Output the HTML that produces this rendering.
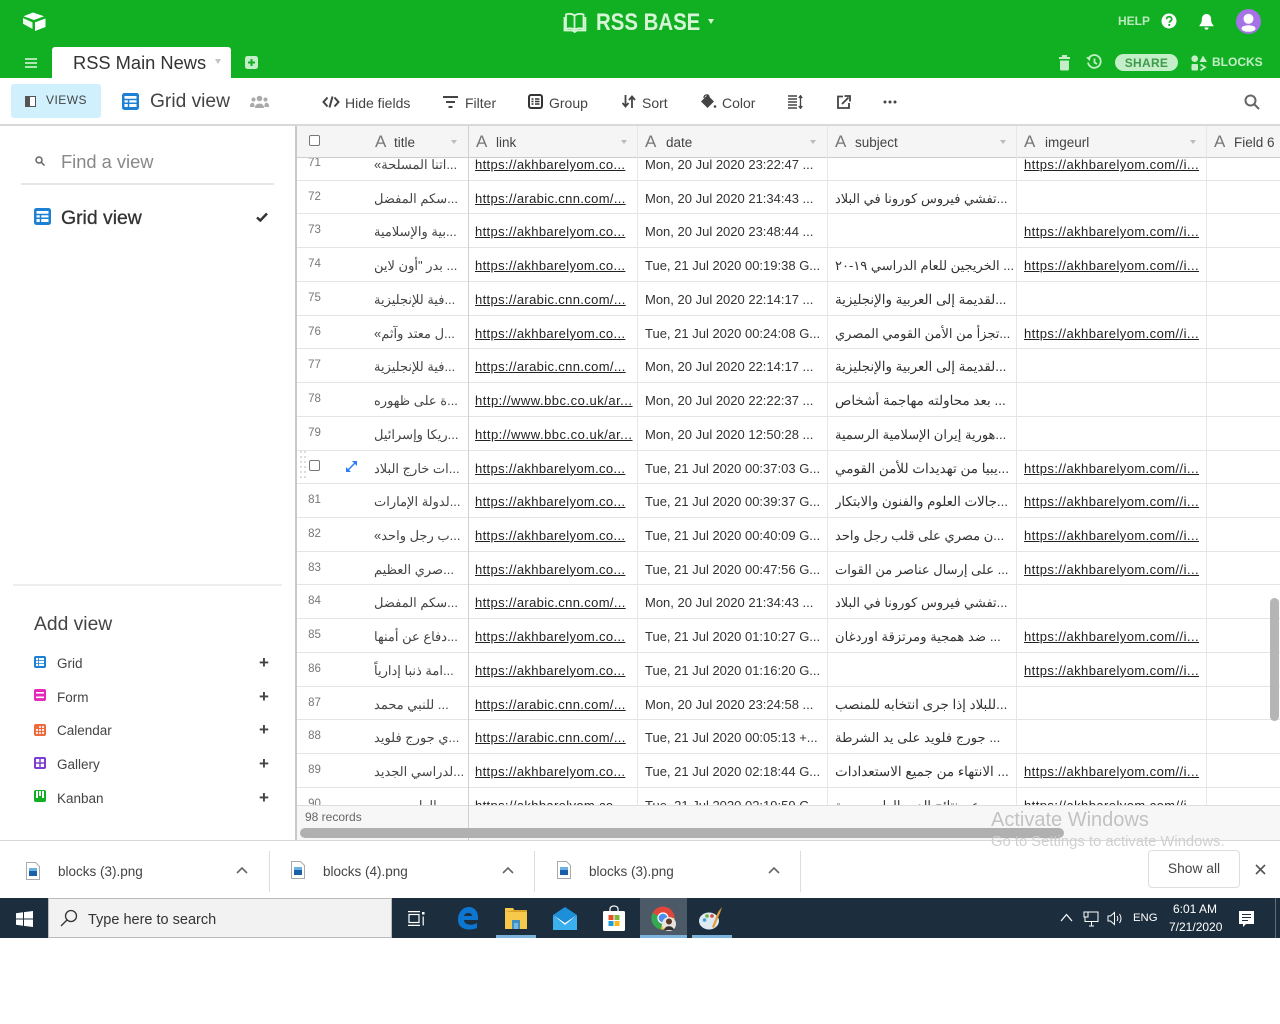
<!DOCTYPE html>
<html><head><meta charset="utf-8"><title>RSS BASE</title>
<style>
html,body{margin:0;padding:0;background:#fff}
body{position:relative;width:1280px;height:1024px;overflow:hidden;font-family:"Liberation Sans","Noto Sans CJK SC",sans-serif;color:#333}
.a{position:absolute;white-space:nowrap}
svg{position:absolute;display:block}
#grid{position:absolute;left:297px;top:158px;width:983px;height:647px;overflow:hidden}
.r{position:absolute;left:0;width:983px;height:33.72px;border-bottom:1px solid #e4e4e4;box-sizing:border-box;font-size:13px;line-height:35px}
.r span{position:absolute;top:0;white-space:nowrap;overflow:hidden}
.r span.n{left:0;width:35px;text-align:center;font-size:11.5px;color:#777;line-height:33px;top:0}
.t{left:77px;width:90px;color:#444;font-size:13px}
.l{left:178px;width:160px;color:#222;text-decoration:underline;letter-spacing:.35px}
.d{left:348px;width:180px;color:#333}
.s{left:538px;width:180px;color:#333}
.i{left:727px;width:180px;color:#222;text-decoration:underline;letter-spacing:.43px}
.v{position:absolute;top:126px;height:680px;width:1px;background:#ddd}
.h{position:absolute;top:134px;font-size:13.5px;color:#444;line-height:17px}
.ha{position:absolute;top:132px;font-size:17px;color:#777;line-height:20px}
.car{position:absolute;top:140px;width:0;height:0;border-left:3.5px solid transparent;border-right:3.5px solid transparent;border-top:4.5px solid #bbb}
.tb{position:absolute;top:94px;font-size:14px;color:#444;line-height:18px}
.av{position:absolute;left:57px;font-size:13.5px;color:#444;line-height:16px}
.pl{position:absolute;left:259px;font-size:17px;font-weight:bold;color:#444;line-height:16px}
.ic{position:absolute;left:34px;width:12px;height:12px;border-radius:2px}
.dl{position:absolute;top:863px;font-size:13.5px;color:#444;line-height:17px}
</style></head><body>

<!-- green header -->
<div class="a" style="left:0;top:0;width:1280px;height:78px;background:#11af22"></div>
<svg style="left:22px;top:12px" width="25" height="19" viewBox="0 0 25 19"><path d="M11 .5 1.5 4.2 12 8l10-3.8z" fill="#fff"/><path d="M23.5 6.500 13 10.400V19l10.500-4z" fill="#fff"/><path d="M1 6l9.500 4.400V17L1 11.800z" fill="#fff" opacity=".92"/></svg>
<svg style="left:563px;top:12px" width="24" height="21" viewBox="0 0 24 21" fill="none" stroke="#d6f5d6" stroke-width="1.800"><path d="M3 2.500c3-1 6-1 8.500 1v14c-2.500-1.500-5.500-1.500-8.500-.5zM20.500 2.500c-3-1-6-1-9 1v14c3-1.500 6-1.500 9-.5z"/><path d="M1.500 5v13.500h8l2.200 1.500 2.200-1.500h8.500V5"/></svg>
<div class="a" style="left:596px;top:9px;font-size:24px;line-height:28px;font-weight:bold;color:#d6f5d6;transform:scaleX(.85);transform-origin:0 0">RSS BASE</div>
<div class="a" style="left:708px;top:19px;width:0;height:0;border-left:3.5px solid transparent;border-right:3.500px solid transparent;border-top:5px solid #d6f5d6"></div>
<div class="a" style="left:1118px;top:14px;font-size:12px;font-weight:bold;letter-spacing:0;line-height:15px;color:#b9e9bd">HELP</div>
<svg style="left:1161px;top:13px" width="16" height="16" viewBox="0 0 16 16"><circle cx="8" cy="8" r="7.500" fill="#fff"/><path d="M5.500 6.200c0-3.300 5.200-3.300 5.200-.1 0 1.900-2.300 1.900-2.300 3.600" fill="none" stroke="#11af22" stroke-width="1.800"/><circle cx="8.300" cy="12" r="1.100" fill="#11af22"/></svg>
<svg style="left:1199px;top:14px" width="15" height="16" viewBox="0 0 15 16"><path d="M7.500 0C4 0 2.800 3 2.800 5.500c0 3-1 4.300-2.300 5.800v1h13.900v-1c-1.300-1.500-2.300-2.800-2.300-5.800C12.200 3 11 0 7.500 0z" fill="#fff"/><path d="M5.500 13.500h4c0 1.500-1 2.200-2 2.200s-2-.7-2-2.200z" fill="#fff"/></svg>
<svg style="left:1236px;top:9px" width="25" height="25" viewBox="0 0 25 25"><circle cx="12.500" cy="12.500" r="12.500" fill="#a672e8"/><circle cx="12.500" cy="9.800" r="5" fill="#fff"/><ellipse cx="12.500" cy="19.500" rx="7" ry="3.300" fill="#fff"/></svg>

<svg style="left:25px;top:58px" width="12" height="10" viewBox="0 0 12 10"><path d="M0 1h12M0 5h12M0 9h12" stroke="#c4eec8" stroke-width="1.800"/></svg>
<div class="a" style="left:52px;top:47px;width:179px;height:31px;background:#fff;border-radius:3px 3px 0 0"></div>
<div class="a" style="left:73px;top:51px;font-size:18.3px;line-height:24px;color:#333">RSS Main News</div>
<div class="a" style="left:215px;top:59px;width:0;height:0;border-left:3.500px solid transparent;border-right:3.500px solid transparent;border-top:5px solid #c4c4c4"></div>
<svg style="left:245px;top:56px" width="13" height="13" viewBox="0 0 13 13"><rect width="13" height="13" rx="2.500" fill="#c4eec8"/><path d="M6.500 3v7M3 6.500h7" stroke="#11af22" stroke-width="2"/></svg>

<svg style="left:1059px;top:55px" width="11" height="16" viewBox="0 0 11 16"><rect x="3" y="0" width="5" height="2" fill="#c4eec8"/><rect x="0" y="2" width="11" height="2" fill="#c4eec8"/><path d="M1 5.500h9V14a1.500 1.500 0 0 1-1.500 1.500h-6A1.500 1.500 0 0 1 1 14z" fill="#c4eec8"/></svg>
<svg style="left:1086px;top:54px" width="16" height="16" viewBox="0 0 16 16" fill="none" stroke="#c4eec8" stroke-width="1.800"><path d="M2.600 4.500A6.400 6.400 0 1 1 2 8.500"/><path d="M8.500 4.500V8.500l2.500 1.500"/><path d="M0 3.500 3.800 7l1-4.500z" fill="#c4eec8" stroke="none"/></svg>
<div class="a" style="left:1115px;top:54px;width:63px;height:17px;border-radius:9px;background:#c4eec8;text-align:center;font-size:12px;font-weight:bold;letter-spacing:.3px;line-height:18px;color:#3f9a4b">SHARE</div>
<svg style="left:1191px;top:55px" width="16" height="16" viewBox="0 0 16 16"><circle cx="3.700" cy="3.700" r="3.300" fill="#c4eec8"/><path d="M12 .5 16 7H8.500z" fill="#c4eec8"/><rect x=".5" y="9" width="6.500" height="6.500" rx="1" fill="#c4eec8"/><path d="M9.500 9.500 14 12.300l-4.500 3" fill="none" stroke="#c4eec8" stroke-width="1.800"/></svg>
<div class="a" style="left:1212px;top:55px;font-size:12px;font-weight:bold;letter-spacing:0;line-height:15px;color:#c4eec8">BLOCKS</div>

<!-- toolbar -->
<div class="a" style="left:11px;top:84px;width:90px;height:34px;background:#d0f0fd;border-radius:3px"></div>
<svg style="left:25px;top:96px" width="11" height="11" viewBox="0 0 11 11"><rect x=".5" y=".5" width="10" height="10" fill="#fff" stroke="#555"/><rect x=".5" y=".5" width="4.500" height="10" fill="#555"/></svg>
<div class="a" style="left:46px;top:93px;font-size:12px;letter-spacing:.45px;line-height:15px;color:#444">VIEWS</div>
<svg style="left:122px;top:93px" width="17" height="17" viewBox="0 0 17 17"><rect width="17" height="17" rx="2.500" fill="#1c80d4"/><path d="M2.500 3h12v11h-12z" fill="#fff"/><path d="M2 6.500h13M2 10.300h13M6.500 6.500v8" stroke="#1c80d4" stroke-width="1.500"/></svg>
<div class="a" style="left:150px;top:90px;font-size:19.2px;line-height:24px;color:#444">Grid view</div>
<svg style="left:250px;top:95px" width="19" height="14" viewBox="0 0 19 14" fill="#aaa"><circle cx="9.500" cy="3.500" r="2.800"/><circle cx="3.500" cy="4.500" r="2"/><circle cx="15.500" cy="4.500" r="2"/><path d="M5 13c0-6 9-6 9 0zM0 11c0-4 4.500-4.500 4.500-.5V12H0zM19 11c0-4-4.500-4.500-4.500-.5V12H19z"/></svg>

<svg style="left:322px;top:96px" width="18" height="12" viewBox="0 0 18 12" fill="none" stroke="#444" stroke-width="2"><path d="M5.500 1.500 1.500 6l4 4.500M12.500 1.500l4 4.500-4 4.500M10.500.5 7.500 11.500"/></svg>
<div class="tb" style="left:345px">Hide fields</div>
<svg style="left:443px;top:96px" width="15" height="12" viewBox="0 0 15 12"><path d="M0 1h15M3 6h9M5.500 11h4" stroke="#444" stroke-width="2"/></svg>
<div class="tb" style="left:465px">Filter</div>
<svg style="left:528px;top:94px" width="15" height="15" viewBox="0 0 15 15" fill="none" stroke="#333"><rect x="1" y="1" width="13" height="13" rx="2" stroke-width="2"/><path d="M3.500 5h2M3.500 7.500h2M3.500 10h2M7 5h4.500M7 7.500h4.500M7 10h4.500" stroke-width="1.500"/></svg>
<div class="tb" style="left:549px">Group</div>
<svg style="left:622px;top:95px" width="14" height="13" viewBox="0 0 14 13" fill="none" stroke="#444" stroke-width="1.800"><path d="M3.500 0v11M.5 8l3 3.500L6.500 8M10 13V2M7 5l3-3.500L13 5"/></svg>
<div class="tb" style="left:642px">Sort</div>
<svg style="left:700px;top:94px" width="17" height="15" viewBox="0 0 17 15"><path d="M7.500 1 14 7.500 7.500 14 1 7.500z" fill="#444"/><path d="M4 4C4 0 9 0 9 3" fill="none" stroke="#444" stroke-width="1.300"/><circle cx="15" cy="12.500" r="1.300" fill="#444"/></svg>
<div class="tb" style="left:722px">Color</div>
<svg style="left:788px;top:95px" width="15" height="14" viewBox="0 0 15 14" fill="none" stroke="#444"><path d="M0 1h9M0 4h9M0 7h9M0 10h9M0 13h9" stroke-width="1.400"/><path d="M12.500 1v12M10.800 3l1.700-2.300L14.200 3M10.800 11l1.700 2.300 1.700-2.300" stroke-width="1.300"/></svg>
<svg style="left:837px;top:95px" width="14" height="14" viewBox="0 0 14 14" fill="none" stroke="#444" stroke-width="1.800"><path d="M6 1.500H1v11.500h11V8"/><path d="M5 9l6.500-6.500M7.500 1h5.500v5.500" /></svg>
<svg style="left:883px;top:100px" width="14" height="4" viewBox="0 0 14 4" fill="#444"><circle cx="2" cy="2" r="1.500"/><circle cx="7" cy="2" r="1.500"/><circle cx="12" cy="2" r="1.500"/></svg>
<svg style="left:1244px;top:94px" width="16" height="16" viewBox="0 0 16 16" fill="none" stroke="#666" stroke-width="2"><circle cx="6.500" cy="6.500" r="5"/><path d="M10 10l5 5"/></svg>
<div class="a" style="left:0;top:124px;width:1280px;height:2px;background:#d9d9d9"></div>

<!-- sidebar -->
<svg style="left:35px;top:156px" width="10" height="10" viewBox="0 0 10 10" fill="none" stroke="#666" stroke-width="1.500"><circle cx="4" cy="4" r="3"/><path d="M6.300 6.300 9.500 9.500"/></svg>
<div class="a" style="left:61px;top:150px;font-size:18.300px;line-height:24px;color:#888">Find a view</div>
<div class="a" style="left:21px;top:183px;width:253px;height:2px;background:#e6e6e6"></div>
<svg style="left:34px;top:208px" width="17" height="17" viewBox="0 0 17 17"><rect width="17" height="17" rx="2.500" fill="#1c80d4"/><path d="M2.500 3h12v11h-12z" fill="#fff"/><path d="M2 6.500h13M2 10.300h13M6.500 6.500v8" stroke="#1c80d4" stroke-width="1.500"/></svg>
<div class="a" style="left:61px;top:206px;font-size:19.400px;line-height:24px;color:#333;-webkit-text-stroke:.3px #333">Grid view</div>
<svg style="left:256px;top:212px" width="12" height="10" viewBox="0 0 12 10"><path d="M1 5.500 4.300 8.500 11 1.500" fill="none" stroke="#333" stroke-width="2.500"/></svg>
<div class="a" style="left:13px;top:584px;width:269px;height:2px;background:#eee"></div>
<div class="a" style="left:34px;top:613px;font-size:19.300px;line-height:24px;color:#444">Add view</div>

<div class="ic" style="top:656px;background:#1c80d4"></div>
<svg style="left:36px;top:658px" width="8" height="8" viewBox="0 0 8 8"><path d="M0 0h2.200v2.200H0zM3 0h5v2.200H3zM0 3h2.200v2H0zM3 3h5v2H3zM0 5.800h2.200V8H0zM3 5.800h5V8H3z" fill="#fff"/></svg>
<div class="av" style="top:656px">Grid</div><div class="pl" style="top:655px">+</div>
<div class="ic" style="top:689px;background:#e529b8"></div>
<svg style="left:36px;top:692px" width="8" height="7" viewBox="0 0 8 7"><path d="M0 .8h8M0 5.300h8" stroke="#fff" stroke-width="1.600"/></svg>
<div class="av" style="top:690px">Form</div><div class="pl" style="top:689px">+</div>
<div class="ic" style="top:724px;background:#f0683c"></div>
<svg style="left:36px;top:726px" width="8" height="8" viewBox="0 0 8 8" fill="#fff" opacity=".85"><path d="M3 0h2v2H3zM6 0h2v2H6zM0 3h2v2H0zM3 3h2v2H3zM6 3h2v2H6zM0 6h2v2H0zM3 6h2v2H3zM6 6h2v2H6z"/></svg>
<div class="av" style="top:723px">Calendar</div><div class="pl" style="top:722px">+</div>
<div class="ic" style="top:757px;background:#7c3bd1"></div>
<svg style="left:36px;top:759px" width="8" height="8" viewBox="0 0 8 8" fill="#fff"><path d="M0 0h3.300v3.300H0zM4.700 0H8v3.300H4.700zM0 4.700h3.300V8H0zM4.700 4.700H8V8H4.700z"/></svg>
<div class="av" style="top:757px">Gallery</div><div class="pl" style="top:756px">+</div>
<div class="ic" style="top:790px;background:#11af22"></div>
<svg style="left:36px;top:791px" width="8" height="8" viewBox="0 0 8 8" fill="#fff"><path d="M0 0h2v7H0zM3 0h2v5H3zM6 0h2v7H6z"/></svg>
<div class="av" style="top:791px">Kanban</div><div class="pl" style="top:790px">+</div>

<div class="a" style="left:295px;top:126px;width:2px;height:714px;background:#c8c8c8"></div>

<!-- grid header -->
<div class="a" style="left:297px;top:126px;width:983px;height:31px;background:#f5f5f5"></div>
<div class="a" style="left:297px;top:157px;width:983px;height:1px;background:#ccc"></div>
<div class="a" style="left:309px;top:135px;width:9px;height:9px;border:1px solid #777;border-radius:2px;background:#fff"></div>
<div class="ha" style="left:375px">A</div><div class="h" style="left:394px">title</div><div class="car" style="left:451px"></div>
<div class="ha" style="left:476px">A</div><div class="h" style="left:496px">link</div><div class="car" style="left:621px"></div>
<div class="ha" style="left:645px">A</div><div class="h" style="left:666px">date</div><div class="car" style="left:810px"></div>
<div class="ha" style="left:835px">A</div><div class="h" style="left:855px">subject</div><div class="car" style="left:1000px"></div>
<div class="ha" style="left:1024px">A</div><div class="h" style="left:1045px">imgeurl</div><div class="car" style="left:1190px"></div>
<div class="ha" style="left:1214px">A</div><div class="h" style="left:1234px">Field 6</div>

<div id="grid">
<div class="r" style="top:-11px"><span class="n">71</span><span class="t">اتنا المسلحة»&rlm;...</span><span class="l">https://akhbarelyom.co...</span><span class="d">Mon, 20 Jul 2020 23:22:47 ...</span><span class="i">https://akhbarelyom.com//i...</span></div>
<div class="r" style="top:22.7px"><span class="n">72</span><span class="t">سكم المفضل...</span><span class="l">https://arabic.cnn.com/...</span><span class="d">Mon, 20 Jul 2020 21:34:43 ...</span><span class="s">تفشي فيروس كورونا في البلاد...</span></div>
<div class="r" style="top:56.4px"><span class="n">73</span><span class="t">بية والإسلامية...</span><span class="l">https://akhbarelyom.co...</span><span class="d">Mon, 20 Jul 2020 23:48:44 ...</span><span class="i">https://akhbarelyom.com//i...</span></div>
<div class="r" style="top:90.2px"><span class="n">74</span><span class="t">بدر "أون لاين ...</span><span class="l">https://akhbarelyom.co...</span><span class="d">Tue, 21 Jul 2020 00:19:38 G...</span><span class="s">الخريجين للعام الدراسي ١٩-٢٠ ...</span><span class="i">https://akhbarelyom.com//i...</span></div>
<div class="r" style="top:123.9px"><span class="n">75</span><span class="t">فية للإنجليزية...</span><span class="l">https://arabic.cnn.com/...</span><span class="d">Mon, 20 Jul 2020 22:14:17 ...</span><span class="s" style="font-size:13.4px">لقديمة إلى العربية والإنجليزية...</span></div>
<div class="r" style="top:157.6px"><span class="n">76</span><span class="t">ل معتد وآثم»&rlm;...</span><span class="l">https://akhbarelyom.co...</span><span class="d">Tue, 21 Jul 2020 00:24:08 G...</span><span class="s">تجزأ من الأمن القومي المصري...</span><span class="i">https://akhbarelyom.com//i...</span></div>
<div class="r" style="top:191.3px"><span class="n">77</span><span class="t">فية للإنجليزية...</span><span class="l">https://arabic.cnn.com/...</span><span class="d">Mon, 20 Jul 2020 22:14:17 ...</span><span class="s" style="font-size:13.4px">لقديمة إلى العربية والإنجليزية...</span></div>
<div class="r" style="top:225px"><span class="n">78</span><span class="t">ة على ظهوره...</span><span class="l" style="letter-spacing:.5px">http://www.bbc.co.uk/ar...</span><span class="d">Mon, 20 Jul 2020 22:22:37 ...</span><span class="s" style="font-size:13.5px">بعد محاولته مهاجمة أشخاص ...</span></div>
<div class="r" style="top:258.8px"><span class="n">79</span><span class="t">ريكا وإسرائيل...</span><span class="l" style="letter-spacing:.5px">http://www.bbc.co.uk/ar...</span><span class="d">Mon, 20 Jul 2020 12:50:28 ...</span><span class="s">هورية إيران الإسلامية الرسمية...</span></div>
<div class="r" style="top:292.5px"><span class="t">ات خارج البلاد...</span><span class="l">https://akhbarelyom.co...</span><span class="d">Tue, 21 Jul 2020 00:37:03 G...</span><span class="s" style="font-size:13.5px">يبيا من تهديدات للأمن القومي...</span><span class="i">https://akhbarelyom.com//i...</span></div>
<div class="r" style="top:326.2px"><span class="n">81</span><span class="t">لدولة الإمارات...</span><span class="l">https://akhbarelyom.co...</span><span class="d">Tue, 21 Jul 2020 00:39:37 G...</span><span class="s" style="font-size:13.3px">جالات العلوم والفنون والابتكار...</span><span class="i">https://akhbarelyom.com//i...</span></div>
<div class="r" style="top:359.9px"><span class="n">82</span><span class="t">ب رجل واحد»&rlm;...</span><span class="l">https://akhbarelyom.co...</span><span class="d">Tue, 21 Jul 2020 00:40:09 G...</span><span class="s">ن مصري على قلب رجل واحد...</span><span class="i">https://akhbarelyom.com//i...</span></div>
<div class="r" style="top:393.6px"><span class="n">83</span><span class="t">صري العظيم...</span><span class="l">https://akhbarelyom.co...</span><span class="d">Tue, 21 Jul 2020 00:47:56 G...</span><span class="s">على إرسال عناصر من القوات ...</span><span class="i">https://akhbarelyom.com//i...</span></div>
<div class="r" style="top:427.4px"><span class="n">84</span><span class="t">سكم المفضل...</span><span class="l">https://arabic.cnn.com/...</span><span class="d">Mon, 20 Jul 2020 21:34:43 ...</span><span class="s">تفشي فيروس كورونا في البلاد...</span></div>
<div class="r" style="top:461.1px"><span class="n">85</span><span class="t">دفاع عن أمنها...</span><span class="l">https://akhbarelyom.co...</span><span class="d">Tue, 21 Jul 2020 01:10:27 G...</span><span class="s" style="font-size:13.2px">ضد همجية ومرتزقة اوردغان ...</span><span class="i">https://akhbarelyom.com//i...</span></div>
<div class="r" style="top:494.8px"><span class="n">86</span><span class="t">امة ذنبا إدارياً...</span><span class="l">https://akhbarelyom.co...</span><span class="d">Tue, 21 Jul 2020 01:16:20 G...</span><span class="i">https://akhbarelyom.com//i...</span></div>
<div class="r" style="top:528.5px"><span class="n">87</span><span class="t">للنبي محمد ...</span><span class="l">https://arabic.cnn.com/...</span><span class="d">Mon, 20 Jul 2020 23:24:58 ...</span><span class="s" style="font-size:13.4px">للبلاد إذا جرى انتخابه للمنصب...</span></div>
<div class="r" style="top:562.2px"><span class="n">88</span><span class="t">ي جورج فلويد...</span><span class="l">https://arabic.cnn.com/...</span><span class="d">Tue, 21 Jul 2020 00:05:13 +...</span><span class="s" style="font-size:13.2px">جورج فلويد على يد الشرطة ...</span></div>
<div class="r" style="top:596px"><span class="n">89</span><span class="t">لدراسي الجديد...</span><span class="l">https://akhbarelyom.co...</span><span class="d">Tue, 21 Jul 2020 02:18:44 G...</span><span class="s" style="font-size:13.5px">الانتهاء من جميع الاستعدادات ...</span><span class="i">https://akhbarelyom.com//i...</span></div>
<div class="r" style="top:629.7px"><span class="n">90</span><span class="t">العام موسم...</span><span class="l">https://akhbarelyom.co...</span><span class="d">Tue, 21 Jul 2020 02:19:59 G...</span><span class="s">عن نتائج الدور العام مصرية...</span><span class="i">https://akhbarelyom.com//i...</span></div>
</div>

<!-- column lines -->
<div class="v" style="left:468px;background:#d0d0d0;height:714px"></div>
<div class="v" style="left:637px;background:#e6e6e6"></div>
<div class="v" style="left:827px;background:#e6e6e6"></div>
<div class="v" style="left:1016px;background:#e6e6e6"></div>
<div class="v" style="left:1206px;background:#e6e6e6"></div>

<!-- row 80 hover -->
<div class="a" style="left:309px;top:460px;width:9px;height:9px;border:1px solid #777;border-radius:2px;background:#fff"></div>
<svg style="left:300px;top:451px" width="6" height="30" viewBox="0 0 6 30" fill="#ddd"><path d="M0 0h2v2H0zM4 0h2v2H4zM0 5h2v2H0zM4 5h2v2H4zM0 10h2v2H0zM4 10h2v2H4zM0 15h2v2H0zM4 15h2v2H4zM0 20h2v2H0zM4 20h2v2H4zM0 25h2v2H0zM4 25h2v2H4z"/></svg>
<svg style="left:346px;top:461px" width="11" height="11" viewBox="0 0 11 11"><path d="M2 9 9 2" stroke="#2d7ff9" stroke-width="1.500"/><path d="M6 0h5v5zM0 6v5h5z" fill="#2d7ff9"/></svg>

<!-- footer of grid -->
<div class="a" style="left:297px;top:805px;width:983px;height:35px;background:#f7f7f7;border-top:1px solid #ddd;box-sizing:border-box"></div>
<div class="a" style="left:468px;top:805px;width:1px;height:35px;background:#d0d0d0"></div>
<div class="a" style="left:305px;top:810px;font-size:12px;line-height:14px;color:#666">98 records</div>
<div class="a" style="left:300px;top:828px;width:764px;height:10px;border-radius:5px;background:#b0b0b0"></div>
<div class="a" style="left:1270px;top:598px;width:9px;height:123px;border-radius:5px;background:#b5b5b5"></div>
<div class="a" style="left:0;top:840px;width:1280px;height:1px;background:#d8d8d8"></div>

<!-- watermark -->
<div class="a" style="left:991px;top:807px;font-size:20px;line-height:26px;color:#c2c2c2">Activate Windows</div>
<div class="a" style="left:991px;top:833px;font-size:14.800px;line-height:18px;color:#cfcfcf">Go to Settings to activate Windows.</div>

<!-- download bar -->
<svg style="left:26px;top:862px" width="14" height="18" viewBox="0 0 14 18"><path d="M.5.500h9l4 4v13H.5z" fill="#fff" stroke="#aaa"/><rect x="3" y="6" width="8" height="8" fill="#1a5fa8"/><rect x="3" y="6" width="8" height="3" fill="#6ab0e0"/></svg>
<div class="dl" style="left:58px">blocks (3).png</div>
<svg style="left:236px;top:866px" width="12" height="8" viewBox="0 0 12 8"><path d="M1 7 6 2l5 5" fill="none" stroke="#666" stroke-width="1.600"/></svg>
<div class="a" style="left:269px;top:851px;width:1px;height:41px;background:#ddd"></div>
<svg style="left:291px;top:861px" width="14" height="18" viewBox="0 0 14 18"><path d="M.5.500h9l4 4v13H.5z" fill="#fff" stroke="#aaa"/><rect x="3" y="6" width="8" height="8" fill="#1a5fa8"/><rect x="3" y="6" width="8" height="3" fill="#6ab0e0"/></svg>
<div class="dl" style="left:323px">blocks (4).png</div>
<svg style="left:502px;top:866px" width="12" height="8" viewBox="0 0 12 8"><path d="M1 7 6 2l5 5" fill="none" stroke="#666" stroke-width="1.600"/></svg>
<div class="a" style="left:534px;top:851px;width:1px;height:41px;background:#ddd"></div>
<svg style="left:557px;top:861px" width="14" height="18" viewBox="0 0 14 18"><path d="M.5.500h9l4 4v13H.5z" fill="#fff" stroke="#aaa"/><rect x="3" y="6" width="8" height="8" fill="#1a5fa8"/><rect x="3" y="6" width="8" height="3" fill="#6ab0e0"/></svg>
<div class="dl" style="left:589px">blocks (3).png</div>
<svg style="left:768px;top:866px" width="12" height="8" viewBox="0 0 12 8"><path d="M1 7 6 2l5 5" fill="none" stroke="#666" stroke-width="1.600"/></svg>
<div class="a" style="left:800px;top:851px;width:1px;height:41px;background:#ddd"></div>
<div class="a" style="left:1148px;top:850px;width:90px;height:36px;border:1px solid #ddd;border-radius:4px;text-align:center;font-size:13.800px;line-height:35px;color:#444">Show all</div>
<svg style="left:1255px;top:864px" width="11" height="11" viewBox="0 0 11 11"><path d="M1 1l9 9M10 1l-9 9" stroke="#555" stroke-width="1.600"/></svg>

<!-- taskbar -->
<div class="a" style="left:0;top:898px;width:1280px;height:40px;background:#1c2e3d"></div>
<svg style="left:16px;top:911px" width="17" height="16" viewBox="0 0 17 16" fill="#fff"><path d="M0 2.300 7 1.300V7.500H0zM8 1.100 17 0V7.500H8zM0 8.500H7V14.700L0 13.700zM8 8.500H17V16L8 14.900z"/></svg>
<div class="a" style="left:48px;top:898px;width:344px;height:40px;background:#f2f2f2;border:1px solid #bbb;border-bottom:1px solid #bbb;box-sizing:border-box"></div>
<svg style="left:60px;top:909px" width="18" height="18" viewBox="0 0 18 18" fill="none" stroke="#333" stroke-width="1.300"><circle cx="11" cy="7" r="5.500"/><path d="M7 11 1 17"/></svg>
<div class="a" style="left:88px;top:910px;font-size:14.500px;line-height:20px;color:#333">Type here to search</div>
<svg style="left:408px;top:911px" width="17" height="15" viewBox="0 0 17 15" fill="none" stroke="#fff" stroke-width="1.200"><path d="M0 .6h12M0 14.400h12"/><rect x="1" y="3.500" width="10" height="8"/><rect x="14" y="1" width="2.500" height="2.500" fill="#fff" stroke="none"/><path d="M15.200 5.500v9"/></svg>
<svg style="left:457px;top:907px" width="21" height="23" viewBox="0 0 21 23"><path d="M1 13C1 5 6 0 12 0c5 0 9 4 9 10v3H7c0 5 8 6 13 3v5c-7 3-19 2-19-8zM7 9h8c0-4-7-4-8 0z" fill="#0c76d1"/></svg>
<svg style="left:505px;top:908px" width="22" height="21" viewBox="0 0 22 21"><path d="M0 0h8l2 3h12v18H0z" fill="#f6c94b"/><path d="M0 4h22V2H9z" fill="#d9a326"/><rect x="7" y="12" width="8" height="9" fill="#3d8fc4"/><rect x="9" y="15" width="4" height="6" fill="#7bb7dd"/></svg>
<div class="a" style="left:496px;top:935px;width:40px;height:3px;background:#7ab4dc"></div>
<svg style="left:553px;top:907px" width="24" height="23" viewBox="0 0 24 23"><path d="M0 8 12 0l12 8v15H0z" fill="#1c8fd8"/><path d="M0 8l12 8 12-8v0L12 18z" fill="#fff"/><path d="M0 9l12 9 12-9v14H0z" fill="#3ab0ee"/></svg>
<svg style="left:603px;top:905px" width="22" height="26" viewBox="0 0 22 26"><path d="M7 6V4c0-4 8-4 8 0v2" fill="none" stroke="#fff" stroke-width="1.200"/><rect y="6" width="22" height="20" rx="1.500" fill="#fff"/><rect x="5.500" y="10" width="5" height="5" fill="#e8502a"/><rect x="11.500" y="10" width="5" height="5" fill="#7dba3c"/><rect x="5.500" y="16" width="5" height="5" fill="#1e9bd8"/><rect x="11.500" y="16" width="5" height="5" fill="#f9b815"/></svg>
<div class="a" style="left:640px;top:898px;width:47px;height:40px;background:#4b5a66"></div>
<svg style="left:651px;top:906px" width="26" height="26" viewBox="0 0 26 26"><circle cx="12" cy="12" r="11.500" fill="#e2463a"/><path d="M12 12 1.500 7 A11.500 11.500 0 0 0 10 23.500z" fill="#35a853"/><path d="M12 12h11.500A11.500 11.500 0 0 1 10 23.500z" fill="#f6c135"/><circle cx="12" cy="12" r="5" fill="#4b8ef0" stroke="#fff" stroke-width="1.300"/><circle cx="18" cy="18" r="7" fill="#e9e3df"/><circle cx="18" cy="15.500" r="3" fill="#5b3a2a"/><path d="M13 24c1-5 9-5 10 0z" fill="#333"/></svg>
<div class="a" style="left:640px;top:935px;width:47px;height:3px;background:#7ab4dc"></div>
<svg style="left:699px;top:906px" width="25" height="25" viewBox="0 0 25 25"><ellipse cx="10" cy="15" rx="10" ry="8.500" fill="#dfe9f2"/><circle cx="5.500" cy="14" r="1.800" fill="#3fa0dc"/><circle cx="8" cy="10" r="1.800" fill="#6db344"/><circle cx="13" cy="10" r="1.800" fill="#d04a3a"/><path d="M23 1 19 6l-6 15 2 1 6-15z" fill="#e59a3a"/></svg>
<div class="a" style="left:692px;top:935px;width:40px;height:3px;background:#7ab4dc"></div>
<svg style="left:1060px;top:913px" width="13" height="9" viewBox="0 0 13 9"><path d="M1 8l5.500-6.500L12 8" fill="none" stroke="#fff" stroke-width="1.200"/></svg>
<svg style="left:1083px;top:911px" width="16" height="16" viewBox="0 0 16 16" fill="none" stroke="#fff"><path d="M2 1h13v9.500H2zM6 15h5M8.500 11v4"/><rect x="1" y="1" width="4" height="5" fill="#1c2e3d"/></svg>
<svg style="left:1107px;top:911px" width="16" height="15" viewBox="0 0 16 15" fill="none" stroke="#fff"><path d="M1 5h2.500L7.500 1.500v12L3.500 10H1zM10 5c1 1.500 1 3.500 0 5M12.500 3c2 3 2 6 0 9"/></svg>
<div class="a" style="left:1133px;top:911px;font-size:11.300px;line-height:15px;color:#fff">ENG</div>
<div class="a" style="left:1173px;top:902px;font-size:12px;line-height:15px;color:#fff">6:01 AM</div>
<div class="a" style="left:1169px;top:920px;font-size:12px;line-height:15px;color:#fff">7/21/2020</div>
<svg style="left:1238px;top:910px" width="18" height="18" viewBox="0 0 18 18"><path d="M1 1h15v13H8l-3 3v-3H1z" fill="#fff"/><path d="M4 4.500h9M4 7.500h9M4 10.500h6" stroke="#1c2e3d" stroke-width="1"/></svg>
<div class="a" style="left:1275px;top:898px;width:1px;height:40px;background:#5f6e7a"></div>
</body></html>
